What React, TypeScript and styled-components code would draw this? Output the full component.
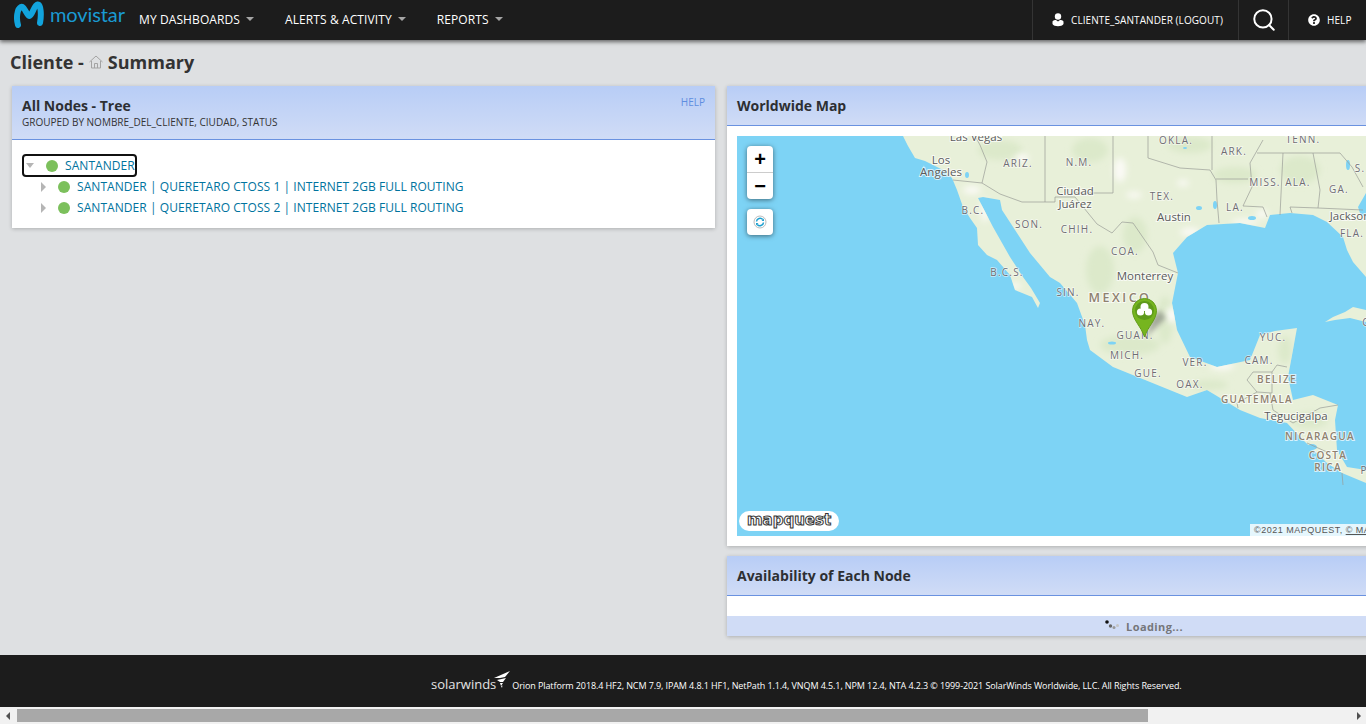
import { FC } from "react";
import styled, { createGlobalStyle } from "styled-components";
import { Search } from "lucide-react";
import { FaQuestionCircle } from "react-icons/fa";

const LAND =
  "M903 136 L908 146 L915 158 L925 161 L933 165 L945 171 L952 178 L957 190 L963 207 L970 218 L977 228 L978 245 L987 255 L997 260 L1010 275 L1015 290 L1032 297 L1038 308 L1040 303 L1031 288 L1023 277 L1010 257 L993 227 L978 198 L983 197 L1000 200 L1002 210 L1017 233 L1030 253 L1050 277 L1060 283 L1077 303 L1085 325 L1087 340 L1090 350 L1113 367 L1150 382 L1187 397 L1207 390 L1240 410 L1260 418 L1287 423 L1303 440 L1327 463 L1342 473 L1366 483 L1366 470 L1347 467 L1337 450 L1335 420 L1338 405 L1313 395 L1293 400 L1288 377 L1297 328 L1275 331 L1260 335 L1250 360 L1217 367 L1190 357 L1177 330 L1172 303 L1178 273 L1173 253 L1187 237 L1207 225 L1240 223 L1265 228 L1270 215 L1290 213 L1313 215 L1327 222 L1343 237 L1347 250 L1353 262 L1366 277 L1366 216 L1361 216 L1358 207 L1366 193 L1366 136 Z";

const BORDERS = [
  "M953 180 L982 183 L1000 194 L1022 202 L1055 202 L1055 197 L1075 197 L1097 224 L1112 233 L1122 222 L1133 223 L1153 252 L1158 265 L1178 273",
  "M975 136 L980 145 L987 162 L982 183",
  "M1045 136 L1045 202",
  "M1113 136 L1113 193 L1075 193",
  "M1148 136 L1148 158 L1180 168 L1210 170 L1216 180 L1217 200 L1219 223",
  "M1212 136 L1212 170",
  "M1216 179 L1248 179",
  "M1263 140 L1250 163 L1252 187 L1243 206 L1263 207 L1267 217",
  "M1257 153 L1340 153 L1352 167 L1363 187",
  "M1283 153 L1280 215",
  "M1313 153 L1320 190 L1318 208 L1290 207 L1292 213",
  "M1318 208 L1363 210",
  "M1247 380 L1253 372 L1272 372 L1272 393 L1257 392 L1247 380",
  "M1272 372 L1277 365 L1287 367",
  "M1257 392 L1237 403 L1238 408",
  "M1270 393 L1273 410 L1293 423 L1320 408 L1338 405",
  "M1307 443 L1327 452",
  "M1342 473 L1343 485",
];

const CITIES = [
  { x: 976, y: 141, t: "Las Vegas" },
  { x: 941, y: 164, t: "Los" },
  { x: 941, y: 176, t: "Angeles" },
  { x: 1075, y: 195, t: "Ciudad" },
  { x: 1075, y: 208, t: "Juárez" },
  { x: 1174, y: 221, t: "Austin" },
  { x: 1145, y: 280, t: "Monterrey" },
  { x: 1296, y: 420, t: "Tegucigalpa" },
  { x: 1350, y: 220, t: "Jackson" },
];

const STATES = [
  { x: 1018, y: 167, t: "ARIZ." },
  { x: 1079, y: 166, t: "N.M." },
  { x: 973, y: 214, t: "B.C." },
  { x: 1029, y: 228, t: "SON." },
  { x: 1007, y: 276, t: "B.C.S." },
  { x: 1077, y: 233, t: "CHIH." },
  { x: 1162, y: 200, t: "TEX." },
  { x: 1176, y: 144, t: "OKLA." },
  { x: 1234, y: 155, t: "ARK." },
  { x: 1303, y: 143, t: "TENN." },
  { x: 1265, y: 186, t: "MISS." },
  { x: 1298, y: 186, t: "ALA." },
  { x: 1339, y: 193, t: "GA." },
  { x: 1360, y: 172, t: "S." },
  { x: 1235, y: 211, t: "LA." },
  { x: 1352, y: 237, t: "FLA." },
  { x: 1125, y: 255, t: "COA." },
  { x: 1068, y: 296, t: "SIN." },
  { x: 1092, y: 327, t: "NAY." },
  { x: 1135, y: 339, t: "GUAN." },
  { x: 1127, y: 359, t: "MICH." },
  { x: 1148, y: 377, t: "GUE." },
  { x: 1195, y: 366, t: "VER." },
  { x: 1190, y: 388, t: "OAX." },
  { x: 1273, y: 341, t: "YUC." },
  { x: 1259, y: 364, t: "CAM." },
  { x: 1364, y: 474, t: "P" },
  { x: 1366, y: 326, t: "C" },
];

const COUNTRIES = [
  { x: 1120, y: 302, t: "MEXICO", big: true },
  { x: 1277, y: 383, t: "BELIZE" },
  { x: 1257, y: 403, t: "GUATEMALA" },
  { x: 1320, y: 440, t: "NICARAGUA" },
  { x: 1328, y: 459, t: "COSTA" },
  { x: 1328, y: 471, t: "RICA" },
];

const GREEN_PATCHES = [
  [1000, 150, 22, 10], [1090, 150, 18, 12], [1190, 145, 22, 8], [1235, 175, 22, 8],
  [1300, 170, 20, 14], [1135, 235, 12, 18], [1100, 270, 14, 24], [1130, 345, 30, 10],
  [1165, 320, 8, 24], [1210, 385, 18, 5], [1310, 420, 18, 8], [1285, 350, 7, 14],
];

const WHITE_PATCHES = [
  [1022, 158, 7, 4], [1120, 170, 6, 12], [1134, 195, 8, 3], [1183, 183, 6, 3],
  [1190, 232, 10, 4], [1245, 222, 14, 3], [1262, 214, 6, 4], [1222, 366, 12, 4],
  [972, 190, 9, 4], [985, 210, 4, 12], [1172, 315, 6, 8], [1015, 286, 6, 3],
];

const Map: FC = () => (
  <MapSvg viewBox="737 136 814 400" preserveAspectRatio="xMinYMin slice">
    <defs>
      <clipPath id="land-clip">
        <path d={LAND} />
      </clipPath>
      <filter id="soft" x="-30%" y="-30%" width="160%" height="160%">
        <feGaussianBlur stdDeviation="3" />
      </filter>
      <filter id="pin-shadow" x="-50%" y="-50%" width="200%" height="200%">
        <feGaussianBlur stdDeviation="2.5" />
      </filter>
    </defs>
    <rect x="737" y="136" width="814" height="400" fill="#7dd3f5" />
    <path d={LAND} fill="#e8f0d9" />
    <path d="M1325 322 L1333 317 L1345 312 L1353 307 L1366 310 L1366 322 L1350 318 L1335 320 Z" fill="#e8f0d9" />
    <g clipPath="url(#land-clip)">
      <g filter="url(#soft)">
        {GREEN_PATCHES.map(([cx, cy, rx, ry]) => (
          <ellipse key={`${cx}-${cy}`} cx={cx} cy={cy} rx={rx} ry={ry} fill="#dce9ca" />
        ))}
      </g>
      <g filter="url(#soft)">
        {WHITE_PATCHES.map(([cx, cy, rx, ry]) => (
          <ellipse key={`${cx}-${cy}`} cx={cx} cy={cy} rx={rx} ry={ry} fill="#fbfaf6" />
        ))}
      </g>
    </g>
    <g fill="#7dd3f5">
      <ellipse cx="1312" cy="447" rx="5" ry="3" />
      <ellipse cx="1112" cy="343" rx="4" ry="1.5" />
      <ellipse cx="967" cy="175" rx="2" ry="3" />
      <ellipse cx="1199" cy="208" rx="3" ry="2" />
      <ellipse cx="1215" cy="205" rx="2" ry="4" />
      <ellipse cx="1185" cy="148" rx="2" ry="1" />
      <ellipse cx="1252" cy="218" rx="4" ry="2" />
      <ellipse cx="1348" cy="165" rx="2" ry="5" />
    </g>
    <g fill="none" stroke="#9a9c96" strokeWidth="0.7">
      {BORDERS.map((d) => (
        <path key={d} d={d} />
      ))}
    </g>
    {STATES.map((s) => (
      <StateLabel key={s.t} x={s.x} y={s.y}>
        {s.t}
      </StateLabel>
    ))}
    {COUNTRIES.map((c) => (
      <CountryLabel key={c.t} x={c.x} y={c.y} $big={c.big}>
        {c.t}
      </CountryLabel>
    ))}
    {CITIES.map((c) => (
      <CityLabel key={c.t} x={c.x} y={c.y}>
        {c.t}
      </CityLabel>
    ))}
    <path d="M1146 337 L1166 318 L1160 310 L1152 318 Z" fill="#555" opacity="0.45" filter="url(#pin-shadow)" />
    <path
      d="M1144.5 337 C1141 326 1132.5 320 1132.5 310.5 A12 12 0 0 1 1156.5 310.5 C1156.5 320 1148 326 1144.5 337 Z"
      fill="#76b51f"
      stroke="#639c1a"
      strokeWidth="1"
    />
    <circle cx="1144.5" cy="310.5" r="9.5" fill="#5f9a1c" />
    <g fill="#fff">
      <circle cx="1144.5" cy="307" r="4" />
      <circle cx="1140.5" cy="312" r="3.6" />
      <circle cx="1148.5" cy="312" r="3.6" />
    </g>
  </MapSvg>
);

const TreeNode: FC<{ depth: number; open?: boolean; focused?: boolean; label: string }> = ({
  depth,
  open,
  focused,
  label,
}) => (
  <TreeRow $depth={depth} $focused={focused}>
    <TreeArrow $open={open} />
    <StatusDot />
    <NodeLink>{label}</NodeLink>
  </TreeRow>
);

const App: FC = () => {
  return (
    <Page>
      <GlobalStyle />
      <TopBar>
        <Logo>
          <svg width="30" height="28" viewBox="0 0 30 28">
            <path
              d="M4 24 C2 17 3 8 7 6 C10 4 13 15 15.5 15 C18 15 20 4 23.500 3.500 C27 3 27.500 14 26 22"
              fill="none"
              stroke="#12a4dd"
              strokeWidth="6"
              strokeLinecap="round"
            />
          </svg>
          <LogoText>movistar</LogoText>
        </Logo>
        <Nav>
          <NavItem>My Dashboards</NavItem>
          <NavItem>Alerts &amp; Activity</NavItem>
          <NavItem>Reports</NavItem>
        </Nav>
        <UserSection>
          <svg width="12" height="14" viewBox="0 0 12 14">
            <circle cx="6" cy="3.500" r="3.200" fill="#fff" />
            <path d="M0.500 8.500 C1 7 3 7 4 7 L6 8.500 L8 7 C9 7 11 7 11.500 8.500 L11.500 11 C10 14 2 14 0.500 11 Z" fill="#fff" />
          </svg>
          <UserText>cliente_santander (logout)</UserText>
        </UserSection>
        <SearchSection>
          <Search size={26} color="#fff" strokeWidth={1.8} />
        </SearchSection>
        <HelpSection>
          <FaQuestionCircle size={12} color="#fff" />
          <UserText>Help</UserText>
        </HelpSection>
      </TopBar>

      <Main>
        <PageTitle>
          Cliente -
          <svg width="14" height="14" viewBox="0 0 14 14" fill="none" stroke="#a3a3a3" strokeWidth="1">
            <path d="M0.500 7 L7 1 L13.500 7" />
            <path d="M2.500 6 L2.500 13 L11.500 13 L11.500 6" />
            <path d="M5.500 13 L5.500 8.500 L8.500 8.500 L8.500 13" />
          </svg>
          Summary
        </PageTitle>
        <Columns>
          <Column>
            <Panel>
              <TreeHeader>
                <div>
                  <PanelTitle>All Nodes - Tree</PanelTitle>
                  <PanelSubtitle>Grouped by Nombre_del_Cliente, Ciudad, Status</PanelSubtitle>
                </div>
                <HelpLink>Help</HelpLink>
              </TreeHeader>
              <TreeBody>
                <TreeNode depth={0} open focused label="SANTANDER" />
                <TreeNode depth={1} label="SANTANDER | QUERETARO CTOSS 1 | INTERNET 2GB FULL ROUTING" />
                <TreeNode depth={1} label="SANTANDER | QUERETARO CTOSS 2 | INTERNET 2GB FULL ROUTING" />
              </TreeBody>
            </Panel>
          </Column>
          <Column>
            <Panel>
              <PanelHeader>
                <PanelTitle>Worldwide Map</PanelTitle>
              </PanelHeader>
              <MapBody>
                <MapFrame>
                  <Map />
                  <MapControls>
                    <ZoomGroup>
                      <ZoomButton>+</ZoomButton>
                      <ZoomButton>−</ZoomButton>
                    </ZoomGroup>
                    <RefreshButton>
                      <svg width="14" height="14" viewBox="0 0 14 14" fill="none">
                        <circle cx="7" cy="7" r="6" stroke="#a9a9a9" strokeWidth="0.8" />
                        <path d="M3.500 6.500 A3.600 3.600 0 0 1 9.800 4.600" stroke="#1d9fcf" strokeWidth="1.500" />
                        <path d="M10.500 7.500 A3.600 3.600 0 0 1 4.200 9.400" stroke="#1d9fcf" strokeWidth="1.500" />
                        <path d="M8.500 6 L11 6 L11 3.500 Z M5.500 8 L3 8 L3 10.500 Z" fill="#1d9fcf" />
                      </svg>
                    </RefreshButton>
                  </MapControls>
                  <MapQuestBadge>mapquest</MapQuestBadge>
                  <Attribution>
                    ©2021 MAPQUEST, <u>© MAPBOX</u>, <u>© OPENSTREETMAP</u>
                  </Attribution>
                </MapFrame>
              </MapBody>
            </Panel>
            <Panel>
              <PanelHeader>
                <PanelTitle>Availability of Each Node</PanelTitle>
              </PanelHeader>
              <EmptyBody />
              <LoadingStrip>
                <svg width="14" height="12" viewBox="0 0 14 12">
                  <circle cx="2" cy="2" r="1.800" fill="#111" />
                  <circle cx="5.500" cy="6" r="1.700" fill="#666" />
                  <circle cx="9" cy="7.500" r="1.500" fill="#999" />
                  <circle cx="12.500" cy="5.500" r="1.500" fill="#c4c4c4" />
                </svg>
                Loading...
              </LoadingStrip>
            </Panel>
          </Column>
        </Columns>
      </Main>

      <Footer>
        <SolarLogo>
          solarwinds
          <svg width="18" height="18" viewBox="0 0 18 18" fill="#fff">
            <path d="M1 7 L17 0 L12 6 L7 7 Z" />
            <path d="M4 9 L13 7 L10 11 L7 11 Z" />
            <path d="M7 12 L10 12 L8 15 Z" />
            <path d="M8 15 L9.500 14.500 L9 17 Z" />
          </svg>
        </SolarLogo>
        <FooterText>
          Orion Platform 2018.4 HF2, NCM 7.9, IPAM 4.8.1 HF1, NetPath 1.1.4, VNQM 4.5.1, NPM 12.4, NTA 4.2.3 © 1999-2021
          SolarWinds Worldwide, LLC. All Rights Reserved.
        </FooterText>
      </Footer>

      <ScrollBar>
        <ScrollArrow $side="left" />
        <ScrollThumb />
        <ScrollArrow $side="right" />
      </ScrollBar>
    </Page>
  );
};

const GlobalStyle = createGlobalStyle`
  html, body {
    margin: 0;
    padding: 0;
    height: 100%;
    overflow: hidden;
    background: #dee0e2;
    font-family: "Open Sans", "Liberation Sans", sans-serif;
  }
`;

const Page = styled.div`
  width: 1366px;
  height: 724px;
  display: flex;
  flex-direction: column;
  overflow: hidden;
`;

const TopBar = styled.header`
  flex: none;
  height: 40px;
  display: flex;
  align-items: stretch;
  background: #1c1c1c;
  box-shadow: 0 2px 4px rgba(0, 0, 0, 0.55);
  position: relative;
  z-index: 2;
`;

const Logo = styled.div`
  width: 139px;
  padding-left: 14px;
  box-sizing: border-box;
  display: flex;
  align-items: flex-start;
  gap: 6px;
  svg {
    margin-top: 1px;
  }
`;

const LogoText = styled.span`
  font-family: "Lato", sans-serif;
  font-size: 20px;
  line-height: 28px;
  letter-spacing: -0.1px;
  color: #1a9ad2;
`;

const Nav = styled.nav`
  display: flex;
  align-items: center;
  gap: 31px;
  flex: 1;
  padding-bottom: 2px;
`;

const NavItem = styled.a`
  display: flex;
  align-items: center;
  gap: 6px;
  color: #fff;
  font-size: 12px;
  letter-spacing: 0.1px;
  text-transform: uppercase;
  &::after {
    content: "";
    border-left: 4px solid transparent;
    border-right: 4px solid transparent;
    border-top: 4px solid #a5a5a5;
  }
`;

const NavCell = styled.div`
  display: flex;
  align-items: center;
  box-sizing: border-box;
  border-left: 1px solid #343434;
`;

const UserSection = styled(NavCell)`
  width: 206px;
  padding-left: 19px;
  gap: 7px;
`;

const SearchSection = styled(NavCell)`
  width: 50px;
  justify-content: center;
`;

const HelpSection = styled(NavCell)`
  width: 78px;
  padding-left: 19px;
  gap: 7px;
`;

const UserText = styled.span`
  color: #fff;
  font-size: 10px;
  letter-spacing: 0.08px;
  text-transform: uppercase;
`;

const Main = styled.main`
  flex: 1;
  min-height: 0;
  overflow: hidden;
`;

const PageTitle = styled.h1`
  margin: 0;
  height: 46px;
  box-sizing: border-box;
  padding: 0 0 3px 10px;
  display: flex;
  align-items: center;
  gap: 5px;
  font-size: 18px;
  font-weight: 700;
  color: #333;
  white-space: pre;
`;

const Columns = styled.div`
  display: grid;
  grid-template-columns: 703px 834px;
  gap: 12px;
  padding-left: 12px;
  align-items: start;
`;

const Column = styled.div`
  display: flex;
  flex-direction: column;
  gap: 10px;
`;

const Panel = styled.section`
  background: #fff;
  box-shadow: 0 1px 4px rgba(0, 0, 0, 0.22);
`;

const PanelHeader = styled.div`
  height: 40px;
  box-sizing: border-box;
  padding-left: 10px;
  display: flex;
  align-items: center;
  background: linear-gradient(#b8cdf6, #d0dcf6);
  border-bottom: 1px solid #6a92e0;
`;

const TreeHeader = styled(PanelHeader)`
  height: 54px;
  justify-content: space-between;
  align-items: flex-start;
  padding: 11px 10px 0;
`;

const PanelTitle = styled.h2`
  margin: 0;
  font-size: 14px;
  line-height: 18px;
  font-weight: 700;
  color: #2d2f33;
`;

const PanelSubtitle = styled.div`
  margin-top: 1px;
  font-size: 10px;
  line-height: 13px;
  text-transform: uppercase;
  color: #333;
`;

const HelpLink = styled.a`
  font-size: 10px;
  line-height: 10px;
  text-transform: uppercase;
  color: #5f8ee0;
`;

const TreeBody = styled.div`
  padding: 15px 10px 10px;
`;

const TreeRow = styled.div<{ $depth: number; $focused?: boolean }>`
  height: 21px;
  width: fit-content;
  display: flex;
  align-items: center;
  margin-left: 1px;
  padding-left: ${(p) => 3 + p.$depth * 15}px;
  padding-right: 1px;
  border-radius: 3px;
  white-space: pre;
  outline: ${(p) => (p.$focused ? "2px solid #111" : "none")};
  outline-offset: -1px;
`;

const TreeArrow = styled.span<{ $open?: boolean }>`
  flex: none;
  width: 0;
  height: 0;
  margin-right: 12px;
  border-style: solid;
  border-color: transparent;
  ${(p) =>
    p.$open
      ? "border-width: 5px 4px 0 4px; border-top-color: #b5b5b5;"
      : "border-width: 5px 0 5px 5px; border-left-color: #b5b5b5;"}
`;

const StatusDot = styled.span`
  flex: none;
  width: 12px;
  height: 12px;
  border-radius: 50%;
  background: #7cc05c;
  margin-right: 7px;
`;

const NodeLink = styled.a`
  font-size: 12px;
  letter-spacing: 0.06px;
  color: #00739e;
`;

const MapBody = styled.div`
  padding: 10px;
`;

const MapFrame = styled.div`
  position: relative;
  height: 400px;
  overflow: hidden;
`;

const MapSvg = styled.svg`
  display: block;
  width: 814px;
  height: 400px;
`;

const CityLabel = styled.text`
  font-family: "Open Sans", sans-serif;
  font-size: 11.500px;
  text-anchor: middle;
  fill: #5b5b5b;
  stroke: #fff;
  stroke-width: 2px;
  stroke-opacity: 0.7;
  paint-order: stroke;
`;

const StateLabel = styled.text`
  font-family: "Open Sans", sans-serif;
  font-size: 10px;
  letter-spacing: 1.200px;
  text-anchor: middle;
  fill: #6f6d73;
  stroke: #fff;
  stroke-width: 1.500px;
  stroke-opacity: 0.6;
  paint-order: stroke;
`;

const CountryLabel = styled.text<{ $big?: boolean }>`
  font-family: "Open Sans", sans-serif;
  font-weight: 600;
  font-size: ${(p) => (p.$big ? "12.500px" : "10px")};
  letter-spacing: ${(p) => (p.$big ? "2.500px" : "1.300px")};
  text-anchor: middle;
  fill: #8f816f;
  stroke: #fff;
  stroke-width: 2px;
  stroke-opacity: 0.7;
  paint-order: stroke;
`;

const MapControls = styled.div`
  position: absolute;
  left: 10px;
  top: 10px;
  display: flex;
  flex-direction: column;
  gap: 10px;
`;

const ZoomGroup = styled.div`
  width: 26px;
  background: #fff;
  border-radius: 4px;
  box-shadow: 0 1px 5px rgba(0, 0, 0, 0.5);
`;

const ZoomButton = styled.div`
  height: 26px;
  display: flex;
  align-items: center;
  justify-content: center;
  font-family: "Liberation Sans", sans-serif;
  font-size: 20px;
  font-weight: 700;
  color: #000;
  & + & {
    border-top: 1px solid #ccc;
  }
`;

const RefreshButton = styled.div`
  width: 26px;
  height: 26px;
  background: #fff;
  border-radius: 4px;
  box-shadow: 0 1px 5px rgba(0, 0, 0, 0.5);
  display: flex;
  align-items: center;
  justify-content: center;
`;

const MapQuestBadge = styled.div`
  position: absolute;
  left: 2px;
  bottom: 5px;
  width: 100px;
  height: 20px;
  border-radius: 10px;
  background: #fff;
  text-align: center;
  font-family: "DejaVu Sans", sans-serif;
  font-size: 15px;
  font-weight: 700;
  line-height: 19px;
  color: #fff;
  -webkit-text-stroke: 1px #333;
`;

const Attribution = styled.div`
  position: absolute;
  right: 0;
  bottom: 0;
  width: 301px;
  height: 12px;
  padding-left: 4px;
  box-sizing: border-box;
  background: rgba(255, 255, 255, 0.8);
  font-family: "Liberation Sans", sans-serif;
  font-size: 9px;
  line-height: 12px;
  letter-spacing: 0.5px;
  color: #555;
  white-space: nowrap;
`;

const EmptyBody = styled.div`
  height: 20px;
`;

const LoadingStrip = styled.div`
  height: 20px;
  background: #d0dcf6;
  display: flex;
  align-items: center;
  justify-content: center;
  gap: 7px;
  font-size: 11px;
  font-weight: 700;
  letter-spacing: 0.4px;
  color: #75767a;
`;

const Footer = styled.footer`
  flex: none;
  height: 52px;
  background: #1c1c1c;
  display: flex;
  align-items: flex-start;
  padding: 15px 0 0 431px;
  box-sizing: border-box;
  gap: 1px;
`;

const SolarLogo = styled.div`
  display: flex;
  align-items: flex-start;
  font-size: 13px;
  line-height: 28px;
  color: #e4e4e4;
  svg {
    margin-left: -3px;
    margin-top: 1px;
  }
`;

const FooterText = styled.div`
  font-size: 9px;
  line-height: 31px;
  letter-spacing: -0.095px;
  color: #fff;
  white-space: nowrap;
`;

const ScrollBar = styled.div`
  flex: none;
  height: 17px;
  background: #f1f1f1;
  display: flex;
  align-items: center;
`;

const ScrollThumb = styled.div`
  width: 1131px;
  height: 13px;
  background: #a8a8a8;
`;

const ScrollArrow = styled.div<{ $side: "left" | "right" }>`
  flex: ${(p) => (p.$side === "left" ? "0 0 17px" : "1")};
  display: flex;
  justify-content: ${(p) => (p.$side === "left" ? "flex-start" : "flex-end")};
  padding: ${(p) => (p.$side === "left" ? "0 0 0 6px" : "0 5px 0 0")};
  box-sizing: border-box;
  &::before {
    content: "";
    border-top: 4px solid transparent;
    border-bottom: 4px solid transparent;
    ${(p) => (p.$side === "left" ? "border-right: 4px solid #505050;" : "border-left: 4px solid #505050;")}
  }
`;

export default App;
